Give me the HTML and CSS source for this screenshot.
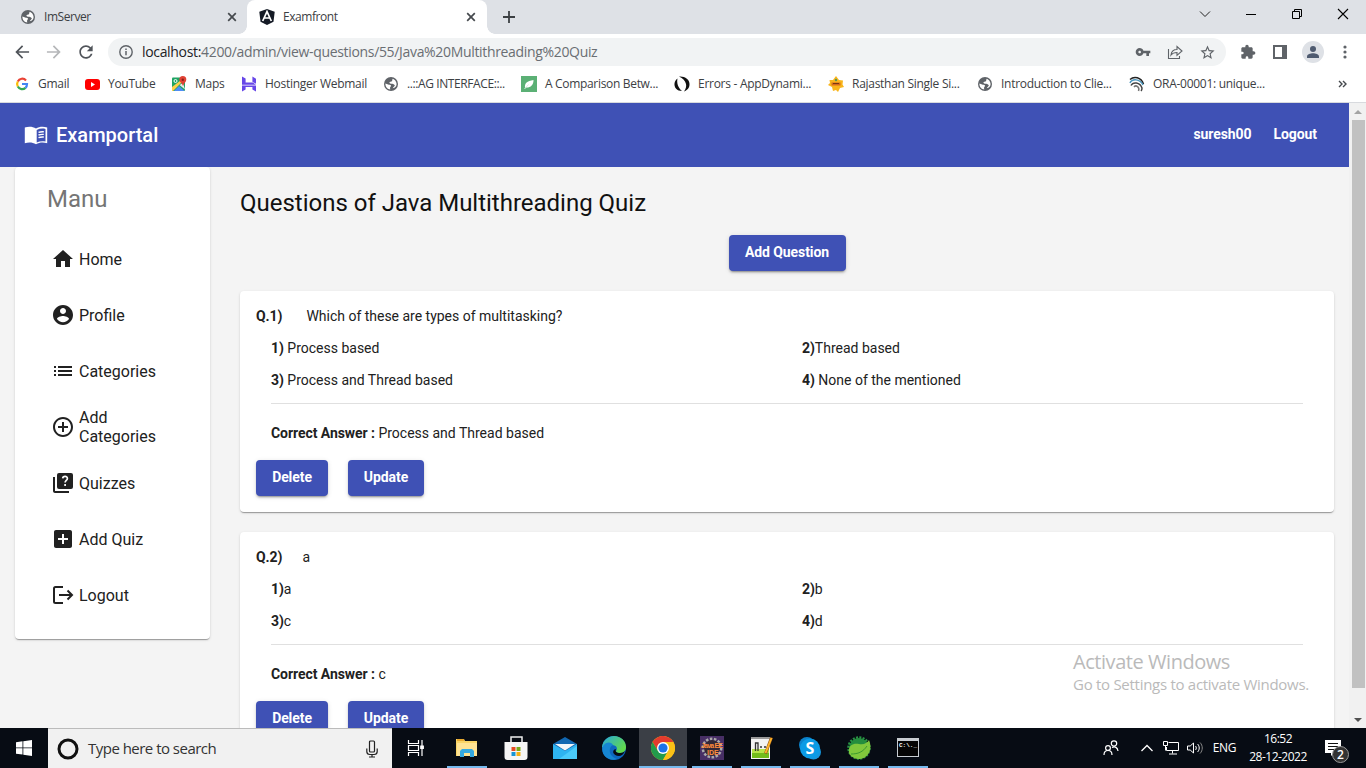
FILE: index.html
```html
<!DOCTYPE html>
<html lang="en">
<head>
<meta charset="utf-8">
<title>Examfront</title>
<link rel="stylesheet" href="styles.css">
</head>
<body>
<svg class="defs" width="0" height="0">
  <symbol id="globe" viewBox="2 2 20 20"><circle cx="12" cy="12" r="10" fill="#5f6368"/><path fill="#fff" d="M11 19.900c-4-.5-7-3.800-7-7.900v-.8L9 13c1.500 0 3 .3 3 1.600 0 1.400-2 1.400-1 5.300zM14.500 18c.5-1.500 2.800-2.500 3-4.500-1.500-.5-2-2-3.500-2-2 0-3 .5-4-.8s.8-2 2.300-2.200c.9-.2 1.700-1 1.500-2.700l.7-1.300c2.300.8 5.500 3.800 5.500 7.500 0 2.900-1.900 5.500-5.500 6z"/></symbol>
  <symbol id="close" viewBox="0 0 10 10"><path d="M1.200 1.200l7.600 7.600M8.800 1.200L1.200 8.800" stroke="#45494d" stroke-width="1.700"/></symbol>
</svg>

<header class="tabs">
  <div class="tab tab-idle"><svg width="14" height="14"><use href="#globe"/></svg><span class="tab-title t-im">ImServer</span><svg width="10" height="10"><use href="#close"/></svg></div>
  <div class="tab tab-active"><svg width="16" height="16" viewBox="0 0 16 16"><path fill="#141a25" d="M8 0l7.700 2.700-1.200 10L8 16l-6.500-3.300L.3 2.700z"/><path d="M3.700 12L8 2.600 12.300 12M5.500 9h5" stroke="#fff" stroke-width="1.700" fill="none"/></svg><span class="tab-title t-ex">Examfront</span><svg width="10" height="10"><use href="#close"/></svg></div>
  <svg class="new-tab" width="12" height="12" viewBox="0 0 12 12"><path d="M6 0v12M0 6h12" stroke="#3c4043" stroke-width="1.800"/></svg>
  <div class="window-buttons">
    <svg width="12" height="12" viewBox="0 0 12 12"><path d="M1 3.500l5 5 5-5" fill="none" stroke="#222"/></svg>
    <svg width="12" height="12" viewBox="0 0 12 12"><path d="M1 6.500h10" stroke="#000"/></svg>
    <svg width="12" height="12" viewBox="0 0 12 12"><path d="M1.500 3.500h7v7h-7zM3.500 3.500v-2h7v7h-2" fill="none" stroke="#000"/></svg>
    <svg width="12" height="12" viewBox="0 0 12 12"><path d="M1 1l10 10M11 1L1 11" stroke="#000" stroke-width="1.100"/></svg>
  </div>
</header>

<nav class="toolbar">
  <svg width="20" height="20" viewBox="0 0 24 24" fill="#50545a"><path d="M20.500 11H7.800l5.600-5.600L12 4l-8 8 8 8 1.400-1.400L7.800 13h12.700z"/></svg>
  <svg width="20" height="20" viewBox="0 0 24 24" fill="#b5b7b9"><path d="M3.500 11h12.700l-5.600-5.600L12 4l8 8-8 8-1.400-1.400 5.600-5.600H3.500z"/></svg>
  <svg width="20" height="20" viewBox="0 0 24 24" fill="#50545a"><path d="M17.650 6.350C16.200 4.900 14.210 4 12 4c-4.420 0-7.990 3.580-7.990 8s3.570 8 7.990 8c3.730 0 6.840-2.550 7.730-6h-2.080c-.82 2.330-3.040 4-5.650 4-3.310 0-6-2.690-6-6s2.690-6 6-6c1.660 0 3.140.69 4.220 1.780L13 11h7V4l-2.350 2.350z"/></svg>
  <div class="omnibox">
    <svg width="16" height="16" viewBox="0 0 16 16"><circle cx="8" cy="8" r="6.200" fill="none" stroke="#5f6368" stroke-width="1.400"/><path d="M8 7v4.200M8 4.600v1.500" stroke="#5f6368" stroke-width="1.500"/></svg>
    <span class="url"><b>localhost:</b>4200/admin/view-questions/55/Java%20Multithreading%20Quiz</span>
    <div class="box-actions">
      <svg width="16" height="16" viewBox="0 0 24 24" fill="#5f6368"><path d="M12.650 10C11.830 7.670 9.610 6 7 6c-3.310 0-6 2.690-6 6s2.690 6 6 6c2.610 0 4.830-1.670 5.650-4H17v4h4v-4h2v-4H12.650zM7 14c-1.100 0-2-.9-2-2s.9-2 2-2 2 .9 2 2-.9 2-2 2z"/></svg>
      <svg width="16" height="16" viewBox="0 0 16 16" fill="none" stroke="#5f6368" stroke-width="1.100"><path d="M1.500 5v9.500h11V12M4 11c.5-4 3-5.500 6-5.500v-3l5 4.500-5 4.300V8.500c-2.500 0-4.500.5-6 2.500z"/></svg>
      <svg width="17" height="17" viewBox="0 0 24 24" fill="#5f6368"><path d="M22 9.240l-7.190-.62L12 2 9.190 8.630 2 9.240l5.460 4.730L5.820 21 12 17.270 18.180 21l-1.630-7.030L22 9.240zM12 15.400l-3.760 2.270 1-4.280-3.320-2.880 4.380-.38L12 6.100l1.710 4.040 4.380.38-3.320 2.880 1 4.280L12 15.400z"/></svg>
    </div>
  </div>
  <div class="tools">
    <svg width="16" height="16" viewBox="0 0 24 24" fill="#5f6368"><path d="M20.500 11H19V7c0-1.100-.9-2-2-2h-4V3.500C13 2.120 11.880 1 10.500 1S8 2.120 8 3.500V5H4c-1.100 0-2 .9-2 2v4.500h1.500a2 2 0 0 1 0 4H2V20c0 1.100.9 2 2 2h4.500v-1.500a2 2 0 0 1 4 0V22H17c1.100 0 2-.9 2-2v-4h1.500c1.380 0 2.500-1.120 2.500-2.500S21.880 11 20.500 11z"/></svg>
    <svg width="14" height="14" viewBox="0 0 14 14"><path d="M1 1h12v12H1z" fill="none" stroke="#5f6368" stroke-width="2"/><path d="M9 1h4v12H9z" fill="#5f6368"/></svg>
    <svg width="22" height="22" viewBox="0 0 22 22"><circle cx="11" cy="11" r="11" fill="#dee1e6"/><circle cx="11" cy="8" r="3" fill="#4f5b70"/><path d="M5 17v-1.500C5 13.500 8.500 12.300 11 12.300s6 1.200 6 3.200V17z" fill="#4f5b70"/></svg>
    <svg width="4" height="14" viewBox="0 0 4 14" fill="#5f6368"><circle cx="2" cy="2" r="1.600"/><circle cx="2" cy="7" r="1.600"/><circle cx="2" cy="12" r="1.600"/></svg>
  </div>
</nav>

<nav class="bookmarks">
  <a><svg width="16" height="16" viewBox="0 0 16 16" fill="none" stroke-width="2.200"><path d="M12 4.400A5 5 0 0 0 3.800 5.500" stroke="#ea4335"/><path d="M3.800 5.500a5 5 0 0 0 0 5" stroke="#fbbc05"/><path d="M3.800 10.500a5 5 0 0 0 7.700 1.400" stroke="#34a853"/><path d="M8 8h5c0 1.800-.5 3-1.500 3.900" stroke="#4285f4"/></svg><span class="b1">Gmail</span></a>
  <a><svg width="16" height="16" viewBox="0 0 16 16"><rect x="1" y="3" width="15" height="11" rx="3" fill="#f00"/><path d="M7 6v5l4-2.500z" fill="#fff"/></svg><span class="b2">YouTube</span></a>
  <a><svg width="16" height="16" viewBox="0 0 16 16"><rect x="1" y="1.500" width="13" height="13.500" rx="1" fill="#1fa463"/><path d="M1 11v4h1L11 6 9.500 4.500z" fill="#ffd04b"/><path d="M3 15l5-5 5.500 5z" fill="#4f8df5"/><path d="M8.500 9l3.500-2 2 6.500z" fill="#e8eaed"/><circle cx="4.500" cy="5" r="1.500" fill="none" stroke="#fff"/><path d="M8.300 3.500a3.500 3.500 0 0 1 7 0C15.300 6 13 7 12 10c-.8-3-3.700-4-3.700-6.500z" fill="#e04335"/><circle cx="11.800" cy="3.700" r="1.200" fill="#8c2019"/></svg><span class="b3">Maps</span></a>
  <a><svg width="16" height="16" viewBox="0 0 16 16" fill="#6747e8"><path d="M1 .5l3.600 2v4H12l3 2.200H1zM11.400.5L15 2.700v5l-3.600-1.900zM1 9.500h14v6l-3.600-2v-2.600H4.600v2.600L1 15.500z"/></svg><span class="b4">Hostinger Webmail</span></a>
  <a><svg width="16" height="16" viewBox="-1 -1 16 16"><use href="#globe" width="14" height="14"/></svg><span class="b5">..::AG INTERFACE::..</span></a>
  <a><svg width="16" height="16" viewBox="0 0 16 16"><path fill="#5bb075" d="M0 0h16v16H0z"/><path d="M4 12C3.500 7 6 5 12.500 4c0 5-3 8-8 7.500z" fill="#fff"/><path d="M3.500 13l4-4.500" stroke="#d8eddf"/></svg><span class="b6">A Comparison Betw...</span></a>
  <a><svg width="16" height="16" viewBox="0 0 16 16" fill="#111"><path d="M5 .5C11 0 15.500 3.500 15.500 8c0 4-2 6-5.500 7.500 2-3 2.500-5 2-7.500C11.300 4.500 9 2.500 5 .5z"/><path d="M3.500 2.500C2.500 7 4 11.500 8 15 3 15 0 11.500.5 7.500.8 5.500 1.700 3.800 3.500 2.500z"/></svg><span class="b7">Errors - AppDynami...</span></a>
  <a><svg width="16" height="16" viewBox="0 0 16 16"><path fill="#f9b51b" d="M8 0l3 4 4 .5-.5 4L16 11l-4 1-2 4-2-2-3 1-1-4-4-2 2-2-.5-3L5 4z"/><path d="M3.500 6.500h9v3h-9z" fill="#d76a1b"/><path d="M5 7.500h6" stroke="#783711"/><circle cx="8" cy="4" r="1.200" fill="#5e9550"/></svg><span class="b8">Rajasthan Single Si...</span></a>
  <a><svg width="16" height="16" viewBox="-1 -1 16 16"><use href="#globe" width="14" height="14"/></svg><span class="b9">Introduction to Clie...</span></a>
  <a class="ora"><svg width="16" height="16" viewBox="0 0 16 16" fill="none" stroke-width="1.500"><path d="M1 3.500C5 0 12 1 14.500 8" stroke="#222"/><path d="M1 7c2-4.500 10-4.500 13 2" stroke="#4995bd"/><path d="M2 9.500c2-4 9-3.500 11 2.500 0 1.500-.5 2.500-1 3" stroke="#444"/><path d="M5 11c2-2.500 6 0 4.500 4" stroke="#777"/></svg><span class="b10">ORA-00001: unique...</span></a>
  <svg class="more" width="9" height="8" viewBox="0 0 9 8"><path d="M1 1l3 3-3 3M5 1l3 3-3 3" fill="none" stroke="#45494d" stroke-width="1.400"/></svg>
</nav>

<div class="viewport">
  <div class="app">
    <div class="app-bar">
      <svg width="24" height="24" viewBox="0 0 24 24"><path fill="#fff" d="M.8 4.500C4.500 3.200 8.800 3.400 12 5.500c3.200-2.100 7.500-2.300 11.200-1v15.700c-3.800-1.300-7.900-1-11.200 1-3.300-2-7.400-2.300-11.200-1z"/><path fill="#3f51b5" d="M12.700 6.900c2.600-1.300 5.600-1.600 8.800-1v12.600c-3.200-.6-6.200-.3-8.800 1z"/><path d="M14.500 9.400c1.600-.6 3.300-.8 5.300-.6M14.500 12c1.600-.6 3.300-.8 5.300-.6M14.500 14.600c1.600-.6 3.300-.8 5.300-.6" fill="none" stroke="#fff" stroke-width="1.400"/></svg>
      <span class="brand">Examportal</span><span class="link user">suresh00</span><span class="link">Logout</span>
    </div>
    <div class="content">
      <aside class="card side">
        <h2>Manu</h2>
        <a><svg viewBox="0 0 24 24"><path d="M10 20v-6h4v6h5v-8h3L12 3 2 12h3v8z"/></svg><span>Home</span></a>
        <a><svg viewBox="0 0 24 24"><path d="M12 2C6.480 2 2 6.480 2 12s4.480 10 10 10 10-4.480 10-10S17.520 2 12 2zm0 3c1.660 0 3 1.340 3 3s-1.340 3-3 3-3-1.340-3-3 1.340-3 3-3zm0 14.200c-2.500 0-4.710-1.280-6-3.220.03-1.990 4-3.080 6-3.080 1.990 0 5.970 1.090 6 3.080-1.290 1.940-3.500 3.220-6 3.220z"/></svg><span>Profile</span></a>
        <a><svg viewBox="0 0 24 24"><path d="M3 13h2v-2H3v2zm0 4h2v-2H3v2zm0-8h2V7H3v2zm4 4h14v-2H7v2zm0 4h14v-2H7v2zM7 7v2h14V7H7z"/></svg><span>Categories</span></a>
        <a><svg viewBox="0 0 24 24"><path d="M13 7h-2v4H7v2h4v4h2v-4h4v-2h-4V7zm-1-5C6.480 2 2 6.480 2 12s4.480 10 10 10 10-4.480 10-10S17.520 2 12 2zm0 18c-4.410 0-8-3.590-8-8s3.590-8 8-8 8 3.590 8 8-3.590 8-8 8z"/></svg><span>Add<br>Categories</span></a>
        <a><svg viewBox="0 0 24 24"><path d="M4 6H2v14c0 1.100.9 2 2 2h14v-2H4z"/><rect x="6" y="2" width="16" height="16" rx="2"/><path d="M11.700 7.400c.2-2.700 4.700-2.800 4.700 0 0 2-2.300 2-2.300 4.200M14.100 13v2" fill="none" stroke="#fff" stroke-width="1.700"/></svg><span>Quizzes</span></a>
        <a><svg viewBox="0 0 24 24"><path d="M19 3H5c-1.110 0-2 .9-2 2v14c0 1.100.89 2 2 2h14c1.100 0 2-.9 2-2V5c0-1.100-.9-2-2-2zm-2 10h-4v4h-2v-4H7v-2h4V7h2v4h4v2z"/></svg><span>Add Quiz</span></a>
        <a><svg viewBox="0 0 24 24"><path d="M12 4H4.500Q3 4 3 5.500v13Q3 20 4.500 20H12M8 12h13M16.500 7.500L21 12l-4.500 4.500" fill="none" stroke="#212121" stroke-width="2"/></svg><span>Logout</span></a>
      </aside>
      <main>
        <h1>Questions of Java Multithreading Quiz</h1>
        <button class="add">Add Question</button>
        <section class="card question">
          <p class="ask"><b>Q.1)</b><span class="q1">Which of these are types of multitasking?</span></p>
          <div class="options"><span><b>1)</b> Process based</span><span><b>2)</b>Thread based</span><span><b>3)</b> Process and Thread based</span><span><b>4)</b> None of the mentioned</span></div>
          <p class="answer"><b>Correct Answer :</b> Process and Thread based</p>
          <div class="actions"><button class="delete">Delete</button><button class="update">Update</button></div>
        </section>
        <section class="card question">
          <p class="ask"><b>Q.2)</b><span class="q2">a</span></p>
          <div class="options"><span><b>1)</b>a</span><span><b>2)</b>b</span><span><b>3)</b>c</span><span><b>4)</b>d</span></div>
          <p class="answer"><b>Correct Answer :</b> c</p>
          <div class="actions"><button class="delete">Delete</button><button class="update">Update</button></div>
        </section>
      </main>
    </div>
  </div>
  <div class="scrollbar">
    <svg width="17" height="17" viewBox="0 0 17 17"><path d="M5 11h8L9 7z" fill="#a3a3a3"/></svg>
    <div class="thumb"></div>
    <svg width="17" height="17" viewBox="0 0 17 17"><path d="M5 7h8l-4 4z" fill="#505050"/></svg>
  </div>
  <div class="activate"><span class="act-title">Activate Windows</span><span class="act-note">Go to Settings to activate Windows.</span></div>
</div>

<footer class="taskbar">
  <div class="start"><svg width="16" height="16" viewBox="0 0 16 16" fill="#fff"><path d="M0 2.200L6.500 1.300v6.200H0zM7.300 1.200L16 0v7.500H7.300zM0 8.300h6.500v6.300L0 13.700zM7.300 8.300H16V16l-8.700-1.200z"/></svg></div>
  <div class="search"><svg width="22" height="22" viewBox="0 0 22 22"><circle cx="11" cy="11" r="9" fill="none" stroke="#111" stroke-width="3"/></svg><span>Type here to search</span>
    <svg width="12" height="18" viewBox="0 0 12 18" fill="none" stroke="#222" stroke-width="1.200"><rect x="3.500" y="1" width="5" height="11" rx="1"/><path d="M.8 8.500v3c0 2 1 3 3 3h4.400c2 0 3-1 3-3v-3M6 14.500V17M3 17h6"/></svg></div>
  <div class="taskview"><svg width="18" height="16" viewBox="0 0 18 16" fill="none" stroke="#fff" stroke-width="1.200"><path d="M1.500 0v3.500h10V0M1.500 5.500h10v5h-10zM1.500 16v-3.500h10V16M15 0v16"/><path d="M13.800 6h2.500v2.500h-2.500z" fill="#fff"/></svg></div>
  <div class="app-icon open"><svg viewBox="0 0 24 24"><path d="M1 3h8l1 2h12v15H1z" fill="#f9d567"/><path d="M2 3h7v2H2z" fill="#e8a92f"/><path d="M2 7h20v13H2z" fill="#fee393"/><path d="M5 21v-6l2-2h10l2 2v6h-4v-4H9v4z" fill="#35a9e0"/></svg></div>
  <div class="app-icon"><svg viewBox="0 0 24 24"><path d="M7 8V1h11v7" fill="none" stroke="#eee" stroke-width="1.500"/><path d="M.5 6h23v15a3 3 0 0 1-3 3h-17a3 3 0 0 1-3-3z" fill="#f5f5f5"/><path d="M7.500 11h4v4h-4z" fill="#e64b22"/><path d="M12.500 11h4v4h-4z" fill="#78aa17"/><path d="M7.500 16h4v4h-4z" fill="#1795d5"/><path d="M12.500 16h4v4h-4z" fill="#f2af13"/></svg></div>
  <div class="app-icon"><svg viewBox="0 0 24 24"><path d="M0 8l12-7 12 7v8H0z" fill="#1167b1"/><path d="M0 8v15h24V8l-12 7z" fill="#2eb4f0"/><path d="M6 23L24 10v13z" fill="#4acbfa"/><path d="M2 8h20l-10 6.500z" fill="#f1f5f8"/></svg></div>
  <div class="app-icon"><svg viewBox="0 0 24 24"><defs><linearGradient id="sea" y2=".6"><stop stop-color="#27a9df"/><stop offset="1" stop-color="#62d94a"/></linearGradient></defs><circle cx="12" cy="12" r="12" fill="#0d67bf"/><path d="M0 11C1 4 6 0 12 0c7 0 12 5 12 11 0 4-3 6-6 6-3 0-4.500-1-4-2 2-2 1-6-4-6-6 0-9 3-10 2z" fill="url(#sea)"/><path d="M14 13c-1 2 0 4 4 4 2 0 4-1 5-2-1 3-4 5-6 5-6 0-8-6-3-7z" fill="#070c14"/><path d="M1 10c3-5 9-4 10-1-4 1-6 11 4 14C6 26-2 18 1 10z" fill="#1686d2"/></svg></div>
  <div class="app-icon open active"><svg viewBox="0 0 24 24"><circle cx="12" cy="12" r="12" fill="#fbc116"/><path d="M12 12H24A12 12 0 0 0 1.600 6L7 15z" fill="#e33b2e"/><path d="M1.600 6A12 12 0 0 0 12 24l5-9-5-3-5 3z" fill="#229b4b"/><path d="M12 6h10.400A12 12 0 0 1 12 24l5.200-9z" fill="#fbc116"/><circle cx="12" cy="12" r="6" fill="#fff"/><circle cx="12" cy="12" r="4.600" fill="#1b73e8"/></svg></div>
  <div class="app-icon open"><svg viewBox="0 0 24 24"><path d="M0 0h24v24H0z" fill="#472f65"/><circle cx="12" cy="12" r="9" fill="none" stroke="#aaa" stroke-width="3" stroke-dasharray="2.500 1.500"/><circle cx="12" cy="12" r="8" fill="#332737"/><g fill="#ff8c3d" font-family="Liberation Sans" font-size="7" font-weight="700"><text x="1" y="12" textLength="22">Java EE</text><text x="7" y="19">IDE</text></g></svg></div>
  <div class="app-icon open"><svg viewBox="0 0 24 24"><path d="M2 1h19v22H2z" fill="#f3f3f3"/><path d="M3 13h17v9H3z" fill="#b7e34a"/><path d="M3 17h17v5H3z" fill="#72bc1b"/><path d="M2 1h19v2H2z" fill="#999"/><path d="M6.500 15V7h2.500v8M11 11h2M15 11h2" fill="none" stroke="#333" stroke-width="1.300"/><path d="M22.500 1.500l-6 16" stroke="#8e5419" stroke-width="3"/><path d="M22.500 2l-6 15" stroke="#ffb42a" stroke-width="2"/></svg></div>
  <div class="app-icon open"><svg viewBox="0 0 24 24"><circle cx="9" cy="9" r="8" fill="#0b82ca"/><circle cx="15.500" cy="16" r="7.500" fill="#1596dd"/><circle cx="12" cy="12.500" r="10" fill="#0b9be5"/><text x="12" y="18" text-anchor="middle" fill="#fff" font-family="Open Sans" font-size="16" font-weight="700">S</text></svg></div>
  <div class="app-icon open"><svg viewBox="0 0 24 24"><circle cx="12" cy="12" r="10.500" fill="none" stroke="#299545" stroke-width="2.500" stroke-dasharray="2 1.300"/><circle cx="12" cy="12" r="10" fill="#248e3e"/><path d="M2 17C1 9 6 7 12 8c5 1 8-1 10-4 4 10-1 18-9 19-5 0-9-2-11-6z" fill="#80c83c"/><path d="M4 18c7 0 12-2 16-8" fill="none" stroke="#3d992f"/></svg></div>
  <div class="app-icon open"><svg viewBox="0 0 24 24"><path d="M1 2h22v19H1z" fill="#c8cdd2"/><path d="M2 5h20v15H2z" fill="#050505"/><text x="3" y="11" fill="#fff" font-family="Liberation Mono" font-size="6" font-weight="700">C:\._</text></svg></div>
  <div class="tray">
    <svg width="16" height="16" viewBox="0 0 16 16" fill="none" stroke="#fff" stroke-width="1.200"><circle cx="11" cy="3.500" r="2.700"/><circle cx="5" cy="8" r="2.400"/><path d="M1 15c0-6 8-6 8 0M9 7.500c3-1.500 5.500 0 6 3.500"/></svg>
    <svg class="chev" width="12" height="8" viewBox="0 0 12 8"><path d="M.5 7L6 1.500 11.500 7" fill="none" stroke="#fff" stroke-width="1.300"/></svg>
    <svg class="net" width="17" height="14" viewBox="0 0 17 14" fill="none" stroke="#fff"><path d="M5.500 1.500h10v8h-12V6M9.500 9.500v3M6 13h8M.5.500h4v4h-4zM2.500 4.500v5"/></svg>
    <svg class="vol" width="17" height="14" viewBox="0 0 17 14" fill="none" stroke="#fff"><path d="M.5 5h2.700L6.500 2v10L3.200 9H.5zM8.500 5c1 1 1 3 0 4M10.500 3c2.300 2 2.300 6 0 8"/><path d="M13 1.500c3 3 3 8 0 11" stroke="#888"/></svg>
    <span class="lang">ENG</span>
    <div class="clock"><span class="time">16:52</span><span class="date">28-12-2022</span></div>
    <div class="notice"><svg width="16" height="16" viewBox="0 0 16 16"><path d="M0 0h16v13H9l-3 3v-3H0z" fill="#fff"/><path d="M3 3.500h10M3 6.500h10M3 9.500h7" stroke="#111"/></svg><span class="badge">2</span></div>
  </div>
</footer>
</body>
</html>
```
FILE: styles.css
```css
* { box-sizing: border-box; }
body { margin: 0; width: 1366px; height: 768px; overflow: hidden; display: flex; flex-direction: column; background: #fff; font: 12px/16px "Open Sans", sans-serif; color: #3c4043; }
svg { flex: none; display: block; }
.defs { position: absolute; }
span { white-space: nowrap; }

.tabs { height: 34px; flex: none; display: flex; align-items: center; background: #dee1e6; }
.tab { height: 34px; display: flex; align-items: center; gap: 9px; }
.tab-title { flex: 1; }
.t-im { letter-spacing: -.45px; }
.t-ex { letter-spacing: -.45px; }
.tab-idle { width: 247px; padding: 0 10px 0 21px; border-radius: 0 0 8px 0; }
.tab-active { width: 240px; padding: 0 11px 0 12px; gap: 8px; background: #fff; border-radius: 8px 8px 0 0; position: relative; }
.tab-active::before, .tab-active::after { content: ""; position: absolute; bottom: 0; width: 8px; height: 8px; }
.tab-active::before { left: -8px; background: radial-gradient(circle at 0 0, #dee1e6 7.500px, #fff 8px); }
.tab-active::after { right: -8px; background: radial-gradient(circle at 100% 0, #dee1e6 7.500px, #fff 8px); }
.new-tab { margin-left: 16px; }
.window-buttons { margin-left: auto; display: flex; gap: 34px; padding: 0 17px 6px 0; }

.toolbar { height: 36px; flex: none; display: flex; align-items: center; padding: 0 20px 0 12px; gap: 12px; }
.omnibox { width: 1118px; height: 28px; margin-left: 0; flex: none; display: flex; align-items: center; gap: 8px; padding: 0 10px; border-radius: 14px; background: #f1f3f4; }
.url { font-size: 14px; color: #6a6e73; letter-spacing: -.33px; }
.url b { font-weight: 400; color: #202124; }
.box-actions { margin-left: auto; display: flex; align-items: center; gap: 16px; }
.tools { flex: 1; display: flex; align-items: center; justify-content: space-between; padding-left: 2px; margin-right: -1px; }
.tools svg:nth-child(3) { margin-left: -1px; margin-right: 2px; }

.bookmarks { height: 33px; flex: none; display: grid; grid-template-columns: 70px 87px 70px 142px 138px 153px 154px 149px 151px 210px 9px; align-items: center; padding: 0 0 5px 14px; border-bottom: 1px solid #d8dade; }
.bookmarks a { display: flex; align-items: center; gap: 8px; }
.bookmarks a.ora { padding-left: 1px; }
.bookmarks span { letter-spacing: -.28px; }
.bookmarks .b5 { letter-spacing: -.4px; }
.bookmarks .b6 { letter-spacing: -.32px; }

.viewport { height: 625px; flex: none; display: flex; position: relative; background: #f4f4f4; }
.app { width: 1349px; height: 625px; overflow: hidden; font: 14px/18px Roboto, sans-serif; color: #212121; }
.app-bar { height: 64px; display: flex; align-items: center; padding: 0 32px 0 24px; background: #3f51b5; color: #fff; font-weight: 500; }
.brand { flex: 1; padding-left: 8px; font-size: 20px; line-height: 32px; }
.link { padding-bottom: 2px; font-weight: 700; letter-spacing: -.08px; }
.user { margin-right: 22px; }
.content { display: flex; gap: 30px; padding: 0 15px; align-items: flex-start; }
.card { background: #fff; border-radius: 4px; box-shadow: 0 2px 1px -1px rgba(0,0,0,.2), 0 1px 1px rgba(0,0,0,.14), 0 1px 3px rgba(0,0,0,.12); }
.side { width: 195px; height: 472px; flex: none; display: flex; flex-direction: column; }
.side h2 { margin: 0; padding: 16px 32px; height: 64px; font: 400 24px/32px Roboto, sans-serif; color: #757575; }
.side a { height: 56px; display: flex; gap: 4px; align-items: center; padding-left: 36px; font-size: 16px; line-height: 19px; }
.side svg { width: 24px; height: 24px; fill: #212121; }
main { flex: 1; display: flex; flex-direction: column; }
h1 { margin: 20px 0 16px; font: 400 24px/32px Roboto, sans-serif; color: #111; letter-spacing: -.01px; }
button { height: 36px; padding: 0 0 2px; border: 0; border-radius: 4px; background: #3f51b5; color: #fff; font: 700 14px/34px Roboto, sans-serif; letter-spacing: -.08px; box-shadow: 0 3px 1px -2px rgba(0,0,0,.2), 0 2px 2px rgba(0,0,0,.14), 0 1px 5px rgba(0,0,0,.12); }
.add { width: 117px; align-self: center; margin-bottom: 20px; }
.delete { width: 72px; }
.update { width: 76px; }
.question { height: 221px; margin-bottom: 20px; padding: 16px; }
.question b { font-weight: 700; letter-spacing: -.06px; }
.question p { margin: 0; }
.ask { display: flex; height: 25px; }
.q1 { margin-left: 24px; letter-spacing: -.01px; }
.q2 { margin-left: 20px; }
.options { display: grid; grid-template-columns: 531px 1fr; grid-auto-rows: 32px; align-items: center; height: 72px; margin: 0 15px; border-bottom: 1px solid #e0e0e0; }
.question .answer { margin: 20px 15px 18px; }
.actions { display: flex; gap: 20px; }

.scrollbar { width: 17px; background: #f1f1f1; display: flex; flex-direction: column; align-items: center; }
.thumb { width: 13px; height: 568px; margin-left: 1px; margin-bottom: 23px; background: #c1c1c1; }
.activate { position: absolute; left: 1073px; top: 546px; display: flex; flex-direction: column; color: #bababa; }
.act-title { font-size: 20px; line-height: 25px; letter-spacing: -.45px; }
.act-note { font-size: 15px; line-height: 20px; letter-spacing: -.28px; }

.taskbar { height: 40px; flex: none; display: flex; background: #070c14; color: #fff; }
.start { width: 48px; display: flex; align-items: center; justify-content: center; }
.search { width: 344px; display: flex; align-items: center; gap: 9px; padding: 0 14px 0 9px; background: #f1f1f1; border-top: 1px solid #bbb; color: #333; font-size: 15px; }
.search span { flex: 1; letter-spacing: -.52px; padding-bottom: 2px; }
.taskview { width: 51px; display: flex; align-items: center; padding-left: 15px; }
.app-icon { width: 48px; margin-right: 1px; display: flex; align-items: center; justify-content: center; }
.app-icon svg { width: 24px; height: 24px; }
.open { background: linear-gradient(#76b9ed, #76b9ed) 4px 100% / 40px 2px no-repeat; }
.active { background: linear-gradient(#76b9ed, #76b9ed) 0 100% / 48px 2px no-repeat #3b3f46; }
.tray { margin-left: auto; display: flex; align-items: center; }
.chev { margin-left: 22px; }
.net { margin-left: 10px; }
.vol { margin-left: 7px; }
.lang { margin-left: 9px; letter-spacing: -.4px; padding-bottom: 1px; }
.clock { margin-left: 12px; width: 60px; display: flex; flex-direction: column; align-items: center; line-height: 18px; }
.clock span { letter-spacing: -.5px; }
.notice { margin: 0 25px 0 17px; position: relative; }
.badge { position: absolute; left: 7px; top: 6px; width: 17px; height: 17px; border-radius: 50%; background: #333; border: 1px solid #999; font-size: 12px; line-height: 15px; text-align: center; font-weight: 600; }
```
